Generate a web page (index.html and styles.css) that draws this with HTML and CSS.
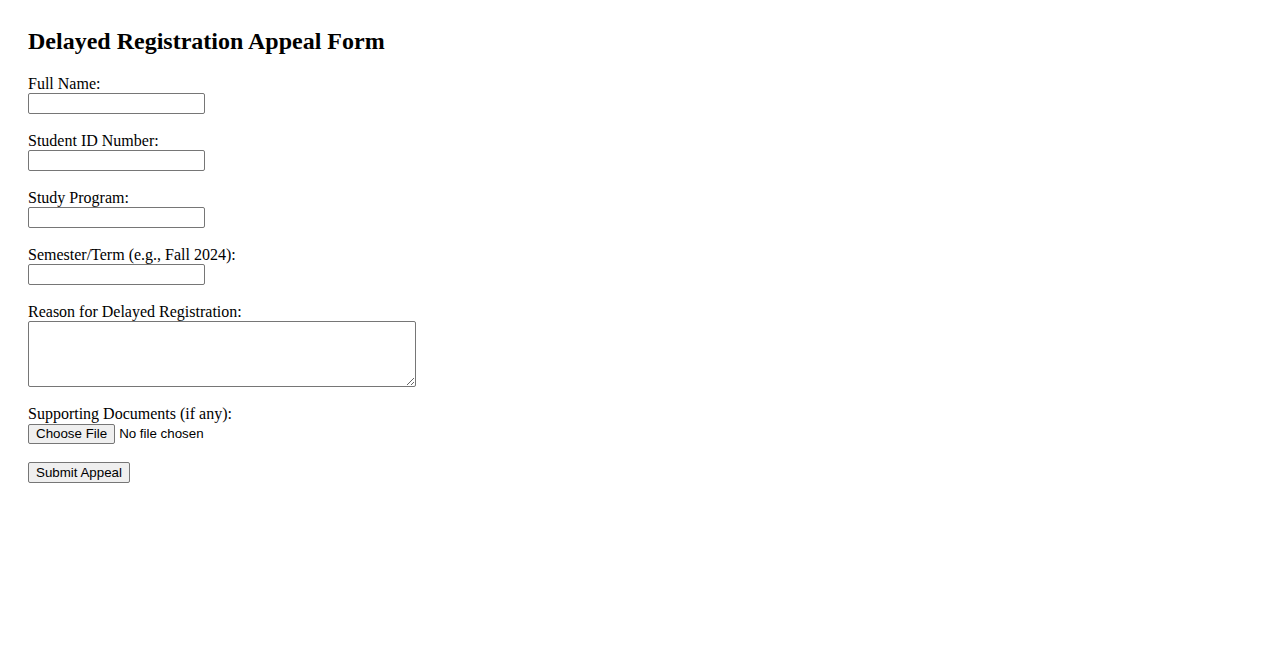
FILE: index.html
```html
<!DOCTYPE html>
<html lang="en">
<head>
<meta charset="utf-8">
<title>Delayed Registration Appeal Form</title>
<link rel="stylesheet" href="styles.css">
</head>
<body>
<main class="page">
  <h2 class="title">Delayed Registration Appeal Form</h2>
  <form class="form">
    <div class="field">
      <label class="label" for="name">Full Name:</label>
      <input class="text" type="text" id="name">
    </div>
    <div class="field">
      <label class="label" for="sid">Student ID Number:</label>
      <input class="text" type="text" id="sid">
    </div>
    <div class="field">
      <label class="label" for="prog">Study Program:</label>
      <input class="text" type="text" id="prog">
    </div>
    <div class="field">
      <label class="label" for="term">Semester/Term (e.g., Fall 2024):</label>
      <input class="text" type="text" id="term">
    </div>
    <div class="field">
      <label class="label" for="reason">Reason for Delayed Registration:</label>
      <textarea class="area" id="reason"></textarea>
    </div>
    <div class="field">
      <label class="label" for="docs">Supporting Documents (if any):</label>
      <div class="file-row">
        <button type="button" class="btn">Choose File</button>
        <span class="file-text">No file chosen</span>
      </div>
    </div>
    <div class="field">
      <button type="submit" class="btn btn-submit">Submit Appeal</button>
    </div>
  </form>
</main>
</body>
</html>
```

FILE: styles.css
```css
html, body {
  margin: 0;
  padding: 0;
  background: #ffffff;
}
body {
  font-family: "Liberation Serif", "Times New Roman", serif;
  font-size: 16px;
  color: #000000;
}
.page {
  padding: 27px 28px;
}
.title {
  margin: 0 0 20px 0;
  font-size: 24px;
  line-height: 28px;
  font-weight: bold;
}
.form {
  display: flex;
  flex-direction: column;
  align-items: flex-start;
  gap: 18px;
}
.field {
  display: flex;
  flex-direction: column;
  align-items: flex-start;
}
.label {
  display: block;
  line-height: 18px;
  height: 18px;
}
.text {
  box-sizing: border-box;
  width: 177px;
  height: 21px;
  margin: 0;
  padding: 1px 2px;
  border: 1px solid #767676;
  border-radius: 2px;
  background: #ffffff;
  font-family: "Liberation Sans", Arial, sans-serif;
  font-size: 13.33px;
}
.area {
  box-sizing: border-box;
  width: 388px;
  height: 66px;
  margin: 0;
  padding: 2px;
  border: 1px solid #767676;
  border-radius: 2px;
  background: #ffffff;
  font-family: "Liberation Mono", monospace;
  font-size: 13.33px;
}
.file-row {
  display: flex;
  align-items: center;
  height: 21px;
}
.btn {
  box-sizing: border-box;
  height: 20px;
  margin: 0;
  padding: 0 7px;
  border: 1px solid #767676;
  border-radius: 2px;
  background: #efefef;
  color: #000000;
  font-family: "Liberation Sans", Arial, sans-serif;
  font-size: 13.33px;
  line-height: 18px;
}
.file-text {
  margin-left: 4px;
  font-family: "Liberation Sans", Arial, sans-serif;
  font-size: 13.33px;
}
.btn-submit {
  height: 21px;
}
```
